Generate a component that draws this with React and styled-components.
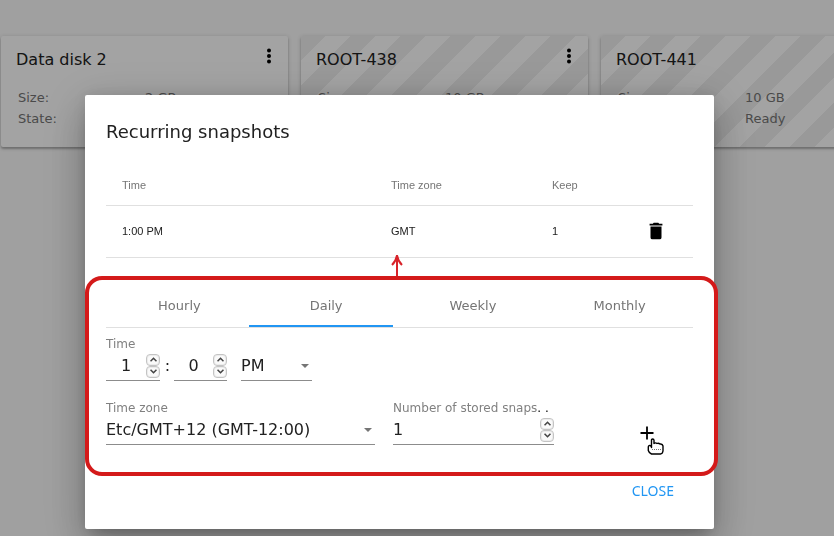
import React, { useState } from "react";
import styled, { createGlobalStyle, css } from "styled-components";

const GlobalStyle = createGlobalStyle`
  * { box-sizing: border-box; }
  body {
    margin: 0;
    background: #fafafa;
    color: #212121;
    font-family: "DejaVu Sans", sans-serif;
    font-size: 16px;
  }
  button, input, select { font: inherit; color: inherit; }
`;

const Page = styled.div`
  min-height: 100vh;
  overflow: hidden;
`;

const CardList = styled.main`
  display: grid;
  grid-auto-flow: column;
  grid-auto-columns: 287px;
  gap: 13px;
  padding: 36px 0 0 1px;
`;

const Card = styled.article`
  height: 111px;
  padding: 12px 8px 0 15px;
  border-radius: 2px;
  background: #fff;
  box-shadow: 0 2px 2px rgba(0, 0, 0, 0.2), 0 1px 4px rgba(0, 0, 0, 0.2);
  ${(p) =>
    p.$striped &&
    css`
      background: linear-gradient(
          135deg,
          #efefef 25%,
          #fff 25%,
          #fff 50%,
          #efefef 50%,
          #efefef 75%,
          #fff 75%
        )
        0 0 / 50px 50px;
    `}
`;

const CardHeader = styled.header`
  display: flex;
  justify-content: space-between;
  align-items: flex-start;
  height: 39px;
`;

const CardTitle = styled.h3`
  margin: 0;
  font-size: 16px;
  font-weight: 400;
  line-height: 24px;
`;

const IconButton = styled.button`
  display: inline-flex;
  align-items: center;
  justify-content: center;
  padding: 0;
  border: 0;
  background: none;
  color: #000;
  cursor: pointer;
`;

const Facts = styled.dl`
  display: grid;
  grid-template-columns: 127px 1fr;
  margin: 0 0 0 2px;
  color: #757575;
  font-size: 13px;
  line-height: 21px;
  dd { margin: 0; }
`;

const Backdrop = styled.div`
  position: fixed;
  inset: 0;
  padding: 95px 120px 7px 85px;
  background: rgba(0, 0, 0, 0.36);
`;

const Dialog = styled.section`
  padding: 24px 21px 29px;
  border-radius: 2px;
  background: #fff;
  box-shadow: 0 11px 15px -7px rgba(0, 0, 0, 0.2),
    0 24px 38px 3px rgba(0, 0, 0, 0.14), 0 9px 46px 8px rgba(0, 0, 0, 0.12),
    0 0 16px rgba(0, 0, 0, 0.1);
`;

const DialogTitle = styled.h2`
  margin: 0 0 20px;
  font-size: 18px;
  font-weight: 400;
  line-height: 26px;
`;

const PolicyTable = styled.table`
  width: 100%;
  table-layout: fixed;
  border-collapse: collapse;
  font-family: "Liberation Sans", sans-serif;
  font-size: 11px;
  text-align: left;
`;

const Column = styled.col`
  width: ${(p) => p.$width};
`;

const HeadCell = styled.th`
  height: 40px;
  padding: 0 16px;
  border-bottom: 1px solid #e0e0e0;
  color: #757575;
  font-weight: 400;
`;

const Cell = styled.td`
  height: 52px;
  padding: 0 16px;
  border-bottom: 1px solid #e0e0e0;
  color: #212121;
`;

const ActionCell = styled(Cell)`
  text-align: center;
  ${IconButton} {
    width: 24px;
    height: 24px;
    vertical-align: middle;
  }
`;

const Editor = styled.div`
  position: relative;
  margin-top: 26px;
`;

const Highlight = styled.div`
  position: absolute;
  inset: -8px -25px -31px -21px;
  border: 4px solid #d41a1a;
  border-radius: 17px;
  pointer-events: none;
`;

const ArrowUp = styled.svg`
  position: absolute;
  left: 283px;
  top: -30px;
  pointer-events: none;
`;

const Tabs = styled.div`
  position: relative;
  display: grid;
  grid-template-columns: repeat(4, 1fr);
  border-bottom: 1px solid #e0e0e0;
`;

const Tab = styled.button`
  height: 43px;
  padding: 0;
  border: 0;
  background: none;
  color: #757575;
  font-size: 13px;
  cursor: pointer;
`;

const InkBar = styled.span`
  position: absolute;
  left: 143px;
  bottom: 0;
  width: 144px;
  height: 2px;
  background: #2196f3;
`;

const Row = styled.div`
  display: flex;
  align-items: flex-end;
  margin-top: ${(p) => p.$top};
`;

const Label = styled.label`
  display: block;
  color: #808080;
  font-size: 12px;
  line-height: 16px;
  white-space: nowrap;
`;

const Dots = styled.span`
  color: #000;
`;

const Field = styled.div`
  flex: 0 1 ${(p) => p.$width};
  min-width: 0;
  margin-right: ${(p) => p.$after || "0"};
`;

const Control = styled.div`
  display: flex;
  align-items: center;
  height: 29px;
  border-bottom: 1px solid #8c8c8c;
`;

const NumberInput = styled.input`
  flex: 1;
  width: 0;
  min-width: 0;
  height: 28px;
  padding: 0;
  border: 0;
  outline: 0;
  background: none;
  text-align: ${(p) => p.$align};
  appearance: textfield;
  &::-webkit-inner-spin-button { appearance: none; }
`;

const SelectInput = styled.select`
  flex: 1;
  min-width: 0;
  height: 28px;
  padding: 0;
  border: 0;
  outline: 0;
  background: none;
  appearance: none;
`;

const SelectArrow = styled.svg`
  flex: none;
  margin-right: 3px;
`;

const Spinner = styled.span`
  display: grid;
  flex: none;
`;

const SpinButton = styled.button`
  display: flex;
  align-items: center;
  justify-content: center;
  width: 14px;
  height: 12px;
  padding: 0;
  border: 1px solid #c4c4c4;
  border-radius: 4px;
  background: #fafafa;
  color: #444;
  box-shadow: inset 0 0 0 1px #ececec;
`;

const Colon = styled.span`
  width: 14px;
  padding-left: 1px;
  line-height: 30px;
  text-align: center;
`;

const AddButton = styled(IconButton)`
  position: relative;
  width: 24px;
  height: 24px;
  margin: 0 34px 0 auto;
`;

const Pointer = styled.svg`
  position: absolute;
  left: 12px;
  top: 17px;
`;

const Actions = styled.footer`
  display: flex;
  justify-content: flex-end;
  margin-top: 37px;
`;

const TextButton = styled.button`
  height: 18px;
  margin-right: 19px;
  padding: 0;
  border: 0;
  background: none;
  color: #2196f3;
  font-family: "Noto Sans", sans-serif;
  font-size: 14px;
  line-height: 18px;
  cursor: pointer;
`;

const volumes = [
  { name: "Data disk 2", size: "2 GB", state: "Ready", striped: false },
  { name: "ROOT-438", size: "10 GB", state: "Ready", striped: true },
  { name: "ROOT-441", size: "10 GB", state: "Ready", striped: true },
];

function VolumeCard({ volume }) {
  return (
    <Card $striped={volume.striped}>
      <CardHeader>
        <CardTitle>{volume.name}</CardTitle>
        <IconButton aria-label={`Actions for ${volume.name}`}>
          <svg width="22" height="16" viewBox="0 0 22 16" fill="currentColor">
            <circle cx="11" cy="2.5" r="2" />
            <circle cx="11" cy="8" r="2" />
            <circle cx="11" cy="13.5" r="2" />
          </svg>
        </IconButton>
      </CardHeader>
      <Facts>
        <dt>Size:</dt>
        <dd>{volume.size}</dd>
        <dt>State:</dt>
        <dd>{volume.state}</dd>
      </Facts>
    </Card>
  );
}

function Chevron({ down }) {
  return (
    <svg width="7" height="5" viewBox="0 0 7 5" fill="none" stroke="currentColor" strokeWidth="1.6">
      <path d={down ? "M0.5 0.7 3.5 3.7 6.5 0.7" : "M0.5 4.3 3.5 1.3 6.5 4.3"} />
    </svg>
  );
}

function NumberField({ id, label, initial, min, max, align = "center" }) {
  const [value, setValue] = useState(initial);
  const step = (delta) =>
    setValue((v) => Math.min(max, Math.max(min, Number(v) + delta)));
  return (
    <Control>
      <NumberInput
        id={id}
        type="number"
        aria-label={label}
        min={min}
        max={max}
        value={value}
        onChange={(e) => setValue(e.target.value)}
        $align={align}
      />
      <Spinner>
        <SpinButton aria-label="Increase" onClick={() => step(1)}>
          <Chevron />
        </SpinButton>
        <SpinButton aria-label="Decrease" onClick={() => step(-1)}>
          <Chevron down />
        </SpinButton>
      </Spinner>
    </Control>
  );
}

function SelectField({ id, label, options }) {
  return (
    <Control>
      <SelectInput id={id} aria-label={label}>
        {options.map((o) => (
          <option key={o}>{o}</option>
        ))}
      </SelectInput>
      <SelectArrow width="8" height="4" viewBox="0 0 8 4">
        <path d="M0 0h8L4 4z" fill="#757575" />
      </SelectArrow>
    </Control>
  );
}

export default function App() {
  return (
    <Page>
      <GlobalStyle />
      <CardList>
        {volumes.map((v) => (
          <VolumeCard key={v.name} volume={v} />
        ))}
      </CardList>
      <Backdrop>
        <Dialog role="dialog" aria-labelledby="dialog-title">
          <DialogTitle id="dialog-title">Recurring snapshots</DialogTitle>
          <PolicyTable>
            <colgroup>
              <Column $width="auto" />
              <Column $width="161px" />
              <Column $width="83px" />
              <Column $width="74px" />
            </colgroup>
            <thead>
              <tr>
                <HeadCell>Time</HeadCell>
                <HeadCell>Time zone</HeadCell>
                <HeadCell colSpan="2">Keep</HeadCell>
              </tr>
            </thead>
            <tbody>
              <tr>
                <Cell>1:00 PM</Cell>
                <Cell>GMT</Cell>
                <Cell>1</Cell>
                <ActionCell>
                  <IconButton aria-label="Delete">
                    <svg width="22" height="22" viewBox="0 0 24 24" fill="currentColor">
                      <path d="M19 4h-3.500l-1-1h-5l-1 1H5v2h14M6 19a2 2 0 0 0 2 2h8a2 2 0 0 0 2-2V7H6v12z" />
                    </svg>
                  </IconButton>
                </ActionCell>
              </tr>
            </tbody>
          </PolicyTable>

          <Editor>
            <Tabs role="tablist">
              {["Hourly", "Daily", "Weekly", "Monthly"].map((t) => (
                <Tab key={t} role="tab" aria-selected={t === "Daily"}>
                  {t}
                </Tab>
              ))}
              <InkBar />
            </Tabs>

            <Row $top="8px">
              <Field $width="54px">
                <Label htmlFor="hour">Time</Label>
                <NumberField id="hour" label="Hour" initial={1} min={1} max={12} />
              </Field>
              <Colon>:</Colon>
              <Field $width="53px" $after="14px">
                <NumberField id="minute" label="Minute" initial={0} min={0} max={59} />
              </Field>
              <Field $width="71px">
                <SelectField id="period" label="AM or PM" options={["PM", "AM"]} />
              </Field>
            </Row>

            <Row $top="19px">
              <Field $width="269px" $after="18px">
                <Label htmlFor="zone">Time zone</Label>
                <SelectField id="zone" label="Time zone" options={["Etc/GMT+12 (GMT-12:00)"]} />
              </Field>
              <Field $width="161px">
                <Label htmlFor="keep">
                  Number of stored snaps<Dots>. .</Dots>
                </Label>
                <NumberField
                  id="keep"
                  label="Number of stored snapshots"
                  initial={1}
                  min={1}
                  max={99}
                  align="left"
                />
              </Field>
              <AddButton aria-label="Add">
                <svg width="14" height="14" viewBox="0 0 14 14" stroke="currentColor" strokeWidth="1.8">
                  <path d="M7 0.500v13M0.500 7h13" />
                </svg>
                <Pointer width="18" height="18" viewBox="0 0 18 18">
                  <path
                    d="M4.500 9.500V2.200Q4.500 1 5.700 1T7 2.200V5.500Q8.500 4.300 10 5.500Q11.500 4.700 13 6Q15.500 5.500 16 8V13Q15.500 16 13.500 16H4.500Q2 15 1.300 12.500V9Q1.500 7.200 3 7.500T4.500 9.500Z"
                    fill="#fff"
                    stroke="#000"
                    strokeWidth="1.4"
                    strokeLinejoin="round"
                  />
                  <path d="M5 11.500h9" stroke="#777" strokeDasharray="1 1" />
                </Pointer>
              </AddButton>
            </Row>
            <Highlight />
            <ArrowUp width="16" height="22" viewBox="0 0 16 22" fill="none" stroke="#d8232a" strokeWidth="2">
              <path d="M8 1v21M3 11Q7 7 8 1.500Q9 7 13 11" />
            </ArrowUp>
          </Editor>

          <Actions>
            <TextButton>CLOSE</TextButton>
          </Actions>
        </Dialog>
      </Backdrop>
    </Page>
  );
}
